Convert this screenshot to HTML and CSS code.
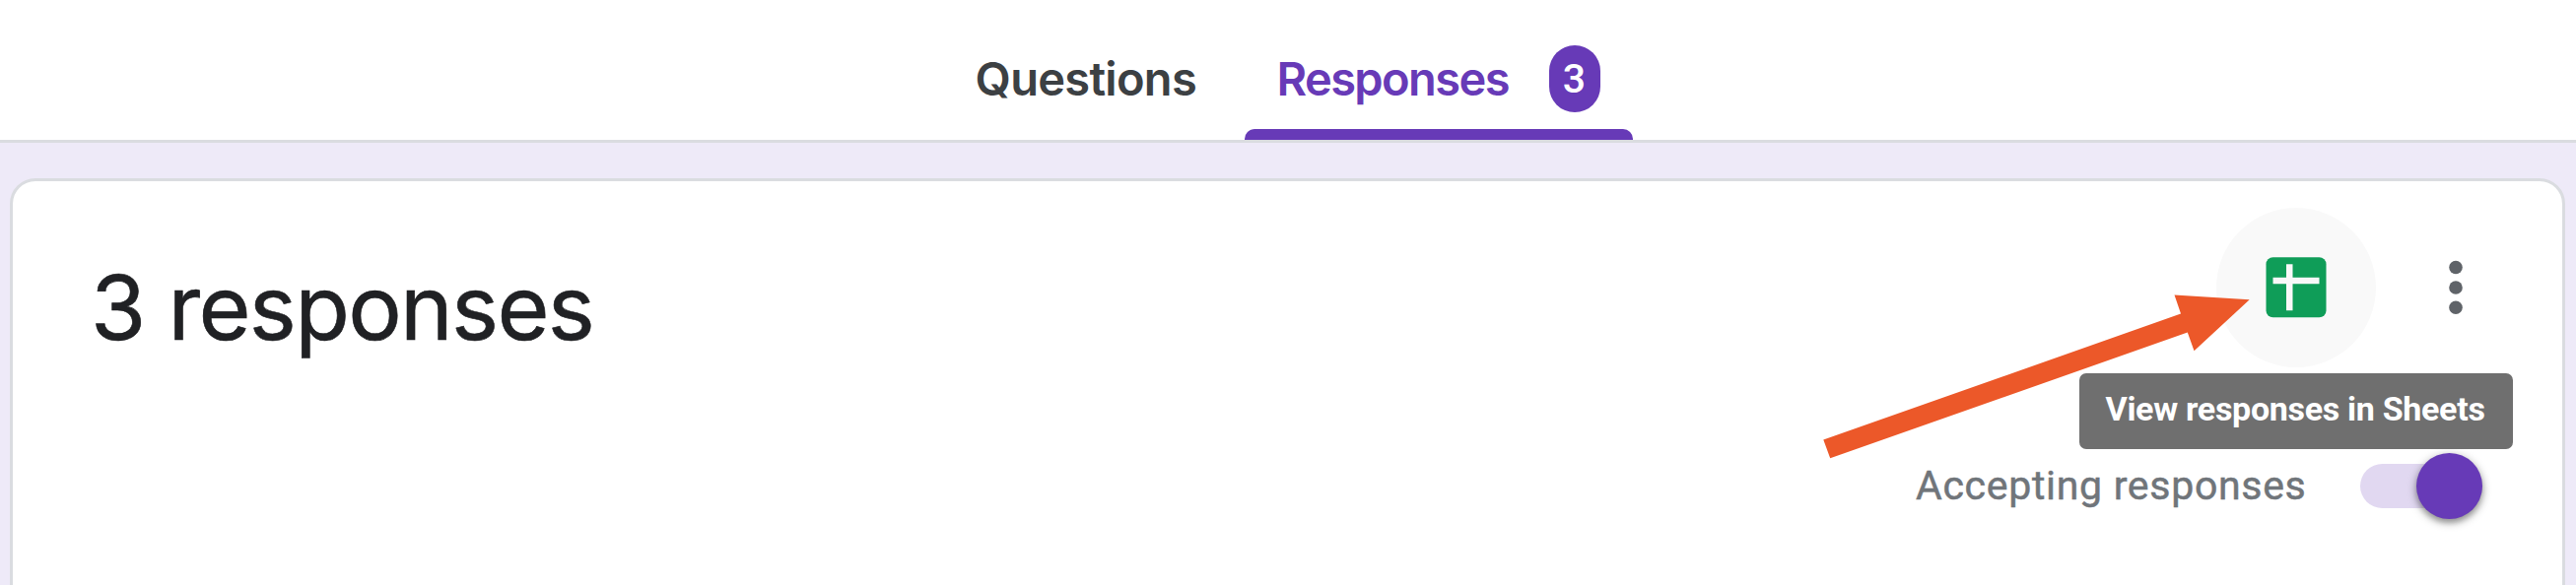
FILE: index.html
```html
<!DOCTYPE html>
<html lang="en">
<head>
<meta charset="utf-8">
<title>Responses</title>
<link rel="stylesheet" href="styles.css">
</head>
<body>
<header class="header">
  <nav class="tabs">
    <a class="tab"><span class="tab-label">Questions</span></a>
    <a class="tab tab-active"><span class="tab-label">Responses</span><span class="badge">3</span></a>
  </nav>
</header>
<main class="page">
  <section class="card">
    <h1 class="title">3 responses</h1>
    <div class="side">
      <div class="actions">
        <button class="icon-button sheets" aria-label="View responses in Sheets">
          <svg width="62" height="62" viewBox="0 0 62 62"><rect x=".5" y=".2" width="61" height="61" rx="7" fill="#0f9d58"/><path fill="#f8f8f8" d="M21 7.200h6.500v13.500H54.500v6.500H27.500V54.200H21V27.200H7.500V20.700H21z"/></svg>
        </button>
        <button class="icon-button more" aria-label="More options">
          <svg width="14" height="56" viewBox="0 0 14 56" fill="#5f6368"><circle cx="7" cy="7.500" r="6.800"/><circle cx="7" cy="28" r="6.800"/><circle cx="7" cy="48.200" r="6.800"/></svg>
        </button>
      </div>
      <div class="accepting">
        <span class="accepting-label">Accepting responses</span>
        <span class="switch"><span class="thumb"></span></span>
      </div>
    </div>
  </section>
</main>
<div class="tooltip"><span class="tooltip-text">View responses in Sheets</span></div>
<svg class="arrow" width="440" height="170" viewBox="1848 298 440 170"><path fill="#ec5829" d="M1850.300 446.500 2213 318.500 2206.500 299.500 2282.700 304.300 2226.500 356.200 2219.800 337.500 1857.200 465.300z"/></svg>
</body>
</html>
```
FILE: styles.css
```css
* { box-sizing: border-box; }
body {
  margin: 0;
  width: 2614px;
  height: 594px;
  overflow: hidden;
  position: relative;
  background: #eeeaf8;
  font-family: Roboto, sans-serif;
}
.header {
  height: 145px;
  background: #fff;
  border-bottom: 3px solid #dadce0;
}
.tabs {
  display: flex;
  height: 142px;
  padding-left: 953.5px;
}
.tab {
  display: flex;
  position: relative;
  width: 309px;
  padding-left: 36px;
  font: 600 47px/56px Inter, sans-serif;
  letter-spacing: -0.7px;
  color: #3c4043;
  white-space: nowrap;
}
.tab-label { padding-top: 52px; }
.tab-active {
  width: 394px;
  padding-left: 33px;
  letter-spacing: -1.600px;
  color: #673ab7;
}
.tab-active::after {
  content: "";
  position: absolute;
  left: 0;
  right: 0;
  bottom: 0;
  height: 11px;
  border-radius: 10px 10px 0 0;
  background: #673ab7;
}
.tab-active .tab-label { width: 276px; }
.badge {
  width: 52px;
  height: 68px;
  margin-top: 46px;
  border-radius: 26px;
  background: #673ab7;
  color: #fff;
  font: 500 41px/68px Roboto, sans-serif;
  letter-spacing: 0;
  text-align: center;
}
.page { padding: 36px 11px 0 10px; }
.card {
  display: flex;
  justify-content: space-between;
  height: 440px;
  padding: 27px 80px 0 79px;
  border: 3px solid #dadce0;
  border-radius: 26px;
  background: #fff;
}
.title {
  margin: 46px 0 0;
  font: 400 91px/110px Inter, sans-serif;
  letter-spacing: -1.700px;
  -webkit-text-stroke: 0.600px #202124;
  color: #202124;
  white-space: nowrap;
}
.side { width: 576px; }
.actions {
  display: flex;
  justify-content: flex-end;
  height: 162px;
}
.icon-button {
  display: flex;
  align-items: center;
  justify-content: center;
  width: 162px;
  height: 162px;
  padding: 0;
  border: 0;
  border-radius: 50%;
  background: none;
}
.sheets { background: #f9f9f9; }
.more { margin-right: -53px; }
.accepting {
  display: flex;
  align-items: center;
  justify-content: space-between;
  height: 68px;
  margin-top: 86px;
}
.accepting-label {
  font: 400 41px/48px Roboto, sans-serif;
  letter-spacing: 0.7px;
  -webkit-text-stroke: 0.500px #70757a;
  color: #70757a;
  white-space: nowrap;
}
.switch {
  display: flex;
  justify-content: flex-end;
  align-items: center;
  width: 124px;
  height: 45px;
  margin-right: 1.500px;
  border-radius: 23px;
  background: #e1d8f1;
}
.thumb {
  flex: none;
  width: 67px;
  height: 67px;
  border-radius: 50%;
  background: #673ab7;
  box-shadow: 0 3px 10px rgba(0, 0, 0, .4), 0 4px 5px rgba(0, 0, 0, .15);
}
.tooltip {
  position: absolute;
  left: 2109.500px;
  top: 379px;
  width: 440px;
  height: 77px;
  padding: 15.500px 0 0 27px;
  border-radius: 7px;
  background: #6f6f6f;
  color: #fff;
  font: 700 34px/40px Roboto, sans-serif;
  letter-spacing: -0.300px;
  white-space: nowrap;
}
.arrow {
  position: absolute;
  left: 1848px;
  top: 298px;
}
```
